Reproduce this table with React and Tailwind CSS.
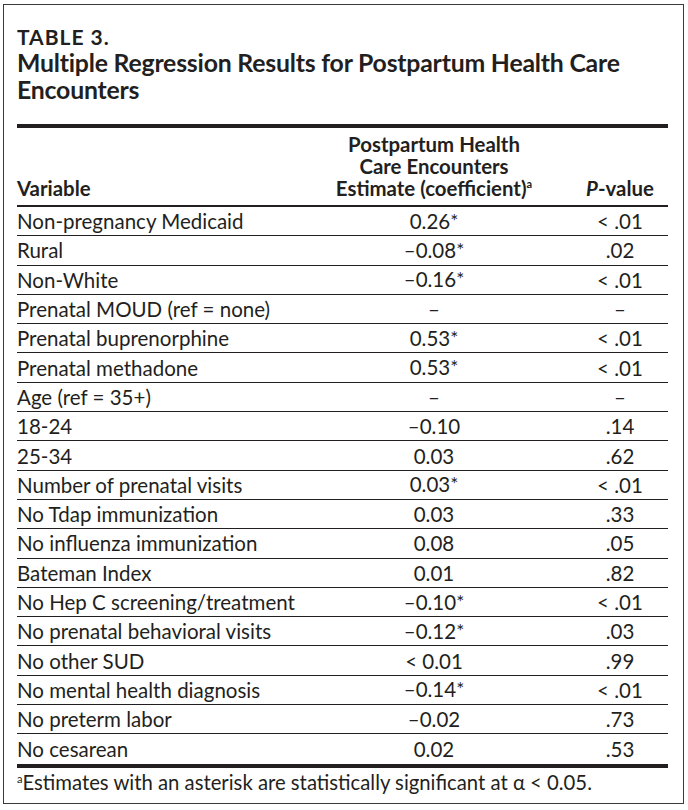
import React from 'react';

const rows = [
  ['Non-pregnancy Medicaid', '0.26*', '< .01'],
  ['Rural', '–0.08*', '.02'],
  ['Non-White', '–0.16*', '< .01'],
  ['Prenatal MOUD (ref = none)', '–', '–'],
  ['Prenatal buprenorphine', '0.53*', '< .01'],
  ['Prenatal methadone', '0.53*', '< .01'],
  ['Age (ref = 35+)', '–', '–'],
  ['18-24', '–0.10', '.14'],
  ['25-34', '0.03', '.62'],
  ['Number of prenatal visits', '0.03*', '< .01'],
  ['No Tdap immunization', '0.03', '.33'],
  ['No influenza immunization', '0.08', '.05'],
  ['Bateman Index', '0.01', '.82'],
  ['No Hep C screening/treatment', '–0.10*', '< .01'],
  ['No prenatal behavioral visits', '–0.12*', '.03'],
  ['No other SUD', '< 0.01', '.99'],
  ['No mental health diagnosis', '–0.14*', '< .01'],
  ['No preterm labor', '–0.02', '.73'],
  ['No cesarean', '0.02', '.53'],
];

// estimate with a raised asterisk
const Estimate = ({ value }) => {
  if (!value.endsWith('*')) return <span>{value}</span>;
  return (
    <span>
      {value.slice(0, -1)}
      <span className="relative top-[-1px] text-[19px]">*</span>
    </span>
  );
};

const App = () => {
  return (
    <div className="w-[688px] h-[810px] bg-white pt-[4px] pl-[3px] text-[#231f20] font-['Lato','Liberation_Sans',sans-serif]">
      <div className="w-[681px] h-[800px] border border-[#3a3a3a] px-[13px]">
        {/* Title */}
        <div className="pt-[20px] h-[119px]">
          <div className="text-[21px] font-bold leading-[24px] tracking-[1px]">TABLE 3.</div>
          <div className="text-[24.8px] font-bold leading-[27px] tracking-[-0.2px]">
            Multiple Regression Results for Postpartum Health Care Encounters
          </div>
        </div>

        {/* Table */}
        <div className="w-[651px]">
          <div className="h-[4px] bg-[#231f20]" />
          <div className="flex items-end h-[77px] pb-[6px] text-[20.4px] font-bold leading-[22px]">
            <div className="w-[317px]">Variable</div>
            <div className="w-[200px] text-center whitespace-nowrap">
              Postpartum Health
              <br />
              Care Encounters
              <br />
              Estimate (coefficient)<sup className="text-[11px] top-[-8px]">a</sup>
            </div>
            <div className="ml-[38px] w-[96px] text-center">
              <i>P</i>-value
            </div>
          </div>
          <div className="h-[2px] bg-[#231f20]" />

          {rows.map((r, i) => (
            <div
              key={i}
              className={`flex items-center h-[29.3px] text-[20.5px] leading-[22px] ${
                i < rows.length - 1 ? 'border-b border-[#231f20]' : ''
              }`}
            >
              <div className="w-[317px] whitespace-nowrap">{r[0]}</div>
              <div className="w-[200px] text-center">
                <Estimate value={r[1]} />
              </div>
              <div className="ml-[38px] w-[96px] text-center">{r[2]}</div>
            </div>
          ))}

          <div className="h-[4px] bg-[#231f20]" />
          <div className="pt-[3px] text-[20.3px] leading-[22px] whitespace-nowrap">
            <sup className="text-[11px] top-[-7px]">a</sup>Estimates with an asterisk are statistically
            significant at α &lt; 0.05.
          </div>
        </div>
      </div>
    </div>
  );
};

export default App;
